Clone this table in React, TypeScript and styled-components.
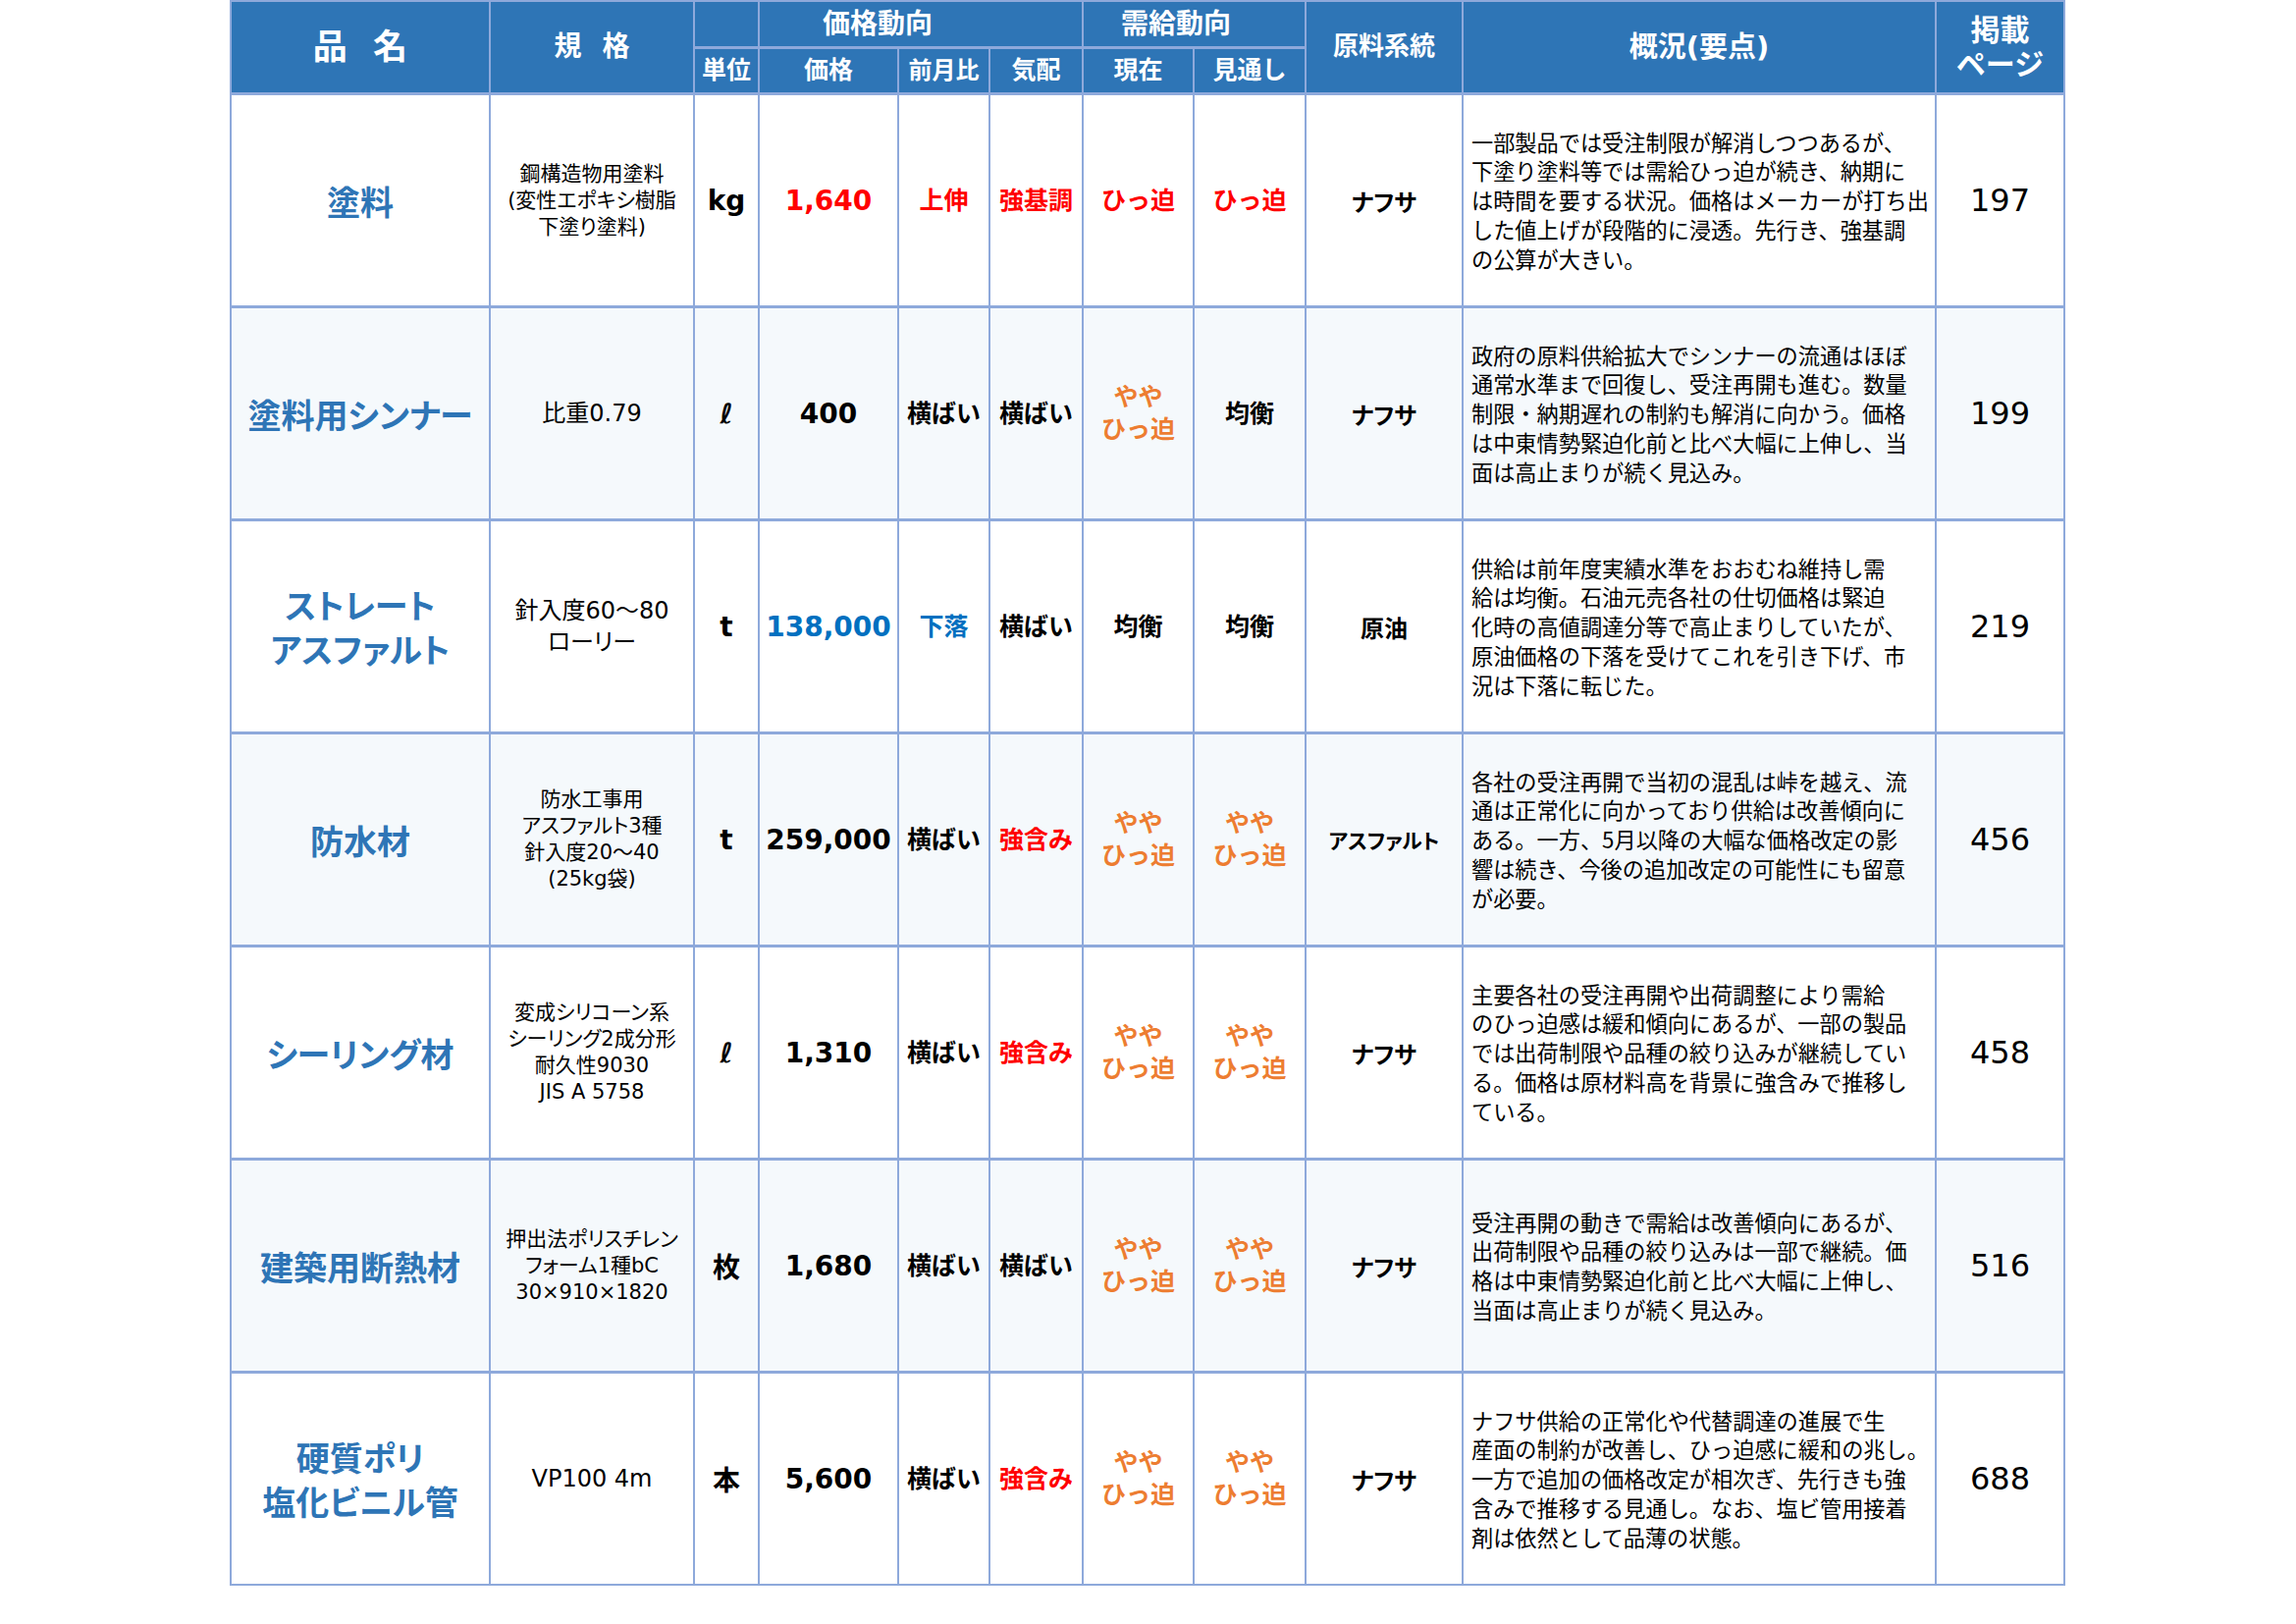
import React from "react";
import styled, { createGlobalStyle } from "styled-components";

const GlobalStyle = createGlobalStyle`
  html, body {
    margin: 0;
    padding: 0;
    background: #ffffff;
  }
  body {
    font-family: "DejaVu Sans", "Noto Sans CJK JP", sans-serif;
    color: #000000;
  }
`;

const HEAD_BG = "#2E75B6";
const LINE = "#8EA9DB";
const SHADE = "#F5F9FC";
const NAME_BLUE = "#2E75B6";
const RED = "#FF0000";
const ORANGE = "#ED7D31";
const BLUE = "#0070C0";
const BLACK = "#000000";

const Table = styled.div`
  display: grid;
  grid-template-columns: 262px 206px 64px 140px 91px 93px 111px 112px 158px 480px 129px;
  grid-template-rows: 45px 44px repeat(7, 214px);
  gap: 3px 2px;
  padding: 2px;
  margin-left: 234px;
  width: max-content;
  background: ${LINE};
`;

const HeadCell = styled.div<{
  $col: string;
  $row: string;
  $size: number;
  $spacing?: number;
  $shift?: number;
  $lh?: number;
}>`
  grid-column: ${(p) => p.$col};
  grid-row: ${(p) => p.$row};
  background: ${HEAD_BG};
  color: #ffffff;
  font-weight: 700;
  font-size: ${(p) => p.$size}px;
  line-height: ${(p) => (p.$lh ? `${p.$lh}px` : "1.2")};
  letter-spacing: ${(p) => p.$spacing ?? 0}em;
  padding-left: ${(p) => p.$spacing ?? 0}em;
  padding-right: ${(p) => p.$shift ?? 0}px;
  display: flex;
  align-items: center;
  justify-content: center;
  text-align: center;
  white-space: nowrap;
`;

const Cell = styled.div<{ $shade: boolean }>`
  background: ${(p) => (p.$shade ? SHADE : "#ffffff")};
  display: flex;
  align-items: center;
  justify-content: center;
  text-align: center;
  white-space: nowrap;
  overflow: hidden;
`;

const NameCell = styled(Cell)`
  color: ${NAME_BLUE};
  font-family: "Noto Sans CJK JP", sans-serif;
  font-weight: 700;
  font-size: 34px;
  line-height: 45px;
  font-feature-settings: "palt";
`;

const SpecCell = styled(Cell)<{ $small: boolean }>`
  font-size: ${(p) => (p.$small ? 21 : 24)}px;
  line-height: ${(p) => (p.$small ? 27 : 32)}px;
  font-feature-settings: "palt";
`;

const UnitCell = styled(Cell)`
  font-weight: 700;
  font-size: 28px;
`;

const PriceCell = styled(Cell)<{ $color: string }>`
  color: ${(p) => p.$color};
  font-weight: 700;
  font-size: 28px;
`;

const TrendCell = styled(Cell)<{ $color: string }>`
  color: ${(p) => p.$color};
  font-weight: 700;
  font-size: 25px;
  line-height: 33px;
`;

const SourceCell = styled(Cell)<{ $small: boolean }>`
  font-weight: 700;
  font-size: ${(p) => (p.$small ? 21 : 24)}px;
  font-feature-settings: "palt";
`;

const NoteCell = styled(Cell)`
  justify-content: flex-start;
  text-align: left;
  padding-left: 8px;
  font-family: "Noto Sans CJK JP", sans-serif;
  font-size: 22.2px;
  line-height: 29.7px;
`;

const NoteLine = styled.span`
  display: block;
  white-space: nowrap;
`;

const PageCell = styled(Cell)`
  font-size: 32px;
  font-weight: 400;
`;

const Lines = styled.div`
  display: flex;
  flex-direction: column;
  align-items: center;
`;

type Row = {
  name: string[];
  spec: string[];
  specSmall: boolean;
  unit: string;
  price: string;
  priceColor: string;
  mom: [string, string];
  mood: [string, string];
  now: [string[], string];
  outlook: [string[], string];
  source: string;
  sourceSmall?: boolean;
  note: string[];
  page: string;
};

const YAYA = ["やや", "ひっ迫"];

const rows: Row[] = [
  {
    name: ["塗料"],
    spec: ["鋼構造物用塗料", "(変性エポキシ樹脂", "下塗り塗料)"],
    specSmall: true,
    unit: "kg",
    price: "1,640",
    priceColor: RED,
    mom: ["上伸", RED],
    mood: ["強基調", RED],
    now: [["ひっ迫"], RED],
    outlook: [["ひっ迫"], RED],
    source: "ナフサ",
    note: [
      "一部製品では受注制限が解消しつつあるが、",
      "下塗り塗料等では需給ひっ迫が続き、納期に",
      "は時間を要する状況。価格はメーカーが打ち出",
      "した値上げが段階的に浸透。先行き、強基調",
      "の公算が大きい。",
    ],
    page: "197",
  },
  {
    name: ["塗料用シンナー"],
    spec: ["比重0.79"],
    specSmall: false,
    unit: "ℓ",
    price: "400",
    priceColor: BLACK,
    mom: ["横ばい", BLACK],
    mood: ["横ばい", BLACK],
    now: [YAYA, ORANGE],
    outlook: [["均衡"], BLACK],
    source: "ナフサ",
    note: [
      "政府の原料供給拡大でシンナーの流通はほぼ",
      "通常水準まで回復し、受注再開も進む。数量",
      "制限・納期遅れの制約も解消に向かう。価格",
      "は中東情勢緊迫化前と比べ大幅に上伸し、当",
      "面は高止まりが続く見込み。",
    ],
    page: "199",
  },
  {
    name: ["ストレート", "アスファルト"],
    spec: ["針入度60～80", "ローリー"],
    specSmall: false,
    unit: "t",
    price: "138,000",
    priceColor: BLUE,
    mom: ["下落", BLUE],
    mood: ["横ばい", BLACK],
    now: [["均衡"], BLACK],
    outlook: [["均衡"], BLACK],
    source: "原油",
    note: [
      "供給は前年度実績水準をおおむね維持し需",
      "給は均衡。石油元売各社の仕切価格は緊迫",
      "化時の高値調達分等で高止まりしていたが、",
      "原油価格の下落を受けてこれを引き下げ、市",
      "況は下落に転じた。",
    ],
    page: "219",
  },
  {
    name: ["防水材"],
    spec: ["防水工事用", "アスファルト3種", "針入度20～40", "(25kg袋)"],
    specSmall: true,
    unit: "t",
    price: "259,000",
    priceColor: BLACK,
    mom: ["横ばい", BLACK],
    mood: ["強含み", RED],
    now: [YAYA, ORANGE],
    outlook: [YAYA, ORANGE],
    source: "アスファルト",
    sourceSmall: true,
    note: [
      "各社の受注再開で当初の混乱は峠を越え、流",
      "通は正常化に向かっており供給は改善傾向に",
      "ある。一方、5月以降の大幅な価格改定の影",
      "響は続き、今後の追加改定の可能性にも留意",
      "が必要。",
    ],
    page: "456",
  },
  {
    name: ["シーリング材"],
    spec: ["変成シリコーン系", "シーリング2成分形", "耐久性9030", "JIS A 5758"],
    specSmall: true,
    unit: "ℓ",
    price: "1,310",
    priceColor: BLACK,
    mom: ["横ばい", BLACK],
    mood: ["強含み", RED],
    now: [YAYA, ORANGE],
    outlook: [YAYA, ORANGE],
    source: "ナフサ",
    note: [
      "主要各社の受注再開や出荷調整により需給",
      "のひっ迫感は緩和傾向にあるが、一部の製品",
      "では出荷制限や品種の絞り込みが継続してい",
      "る。価格は原材料高を背景に強含みで推移し",
      "ている。",
    ],
    page: "458",
  },
  {
    name: ["建築用断熱材"],
    spec: ["押出法ポリスチレン", "フォーム1種bC", "30×910×1820"],
    specSmall: true,
    unit: "枚",
    price: "1,680",
    priceColor: BLACK,
    mom: ["横ばい", BLACK],
    mood: ["横ばい", BLACK],
    now: [YAYA, ORANGE],
    outlook: [YAYA, ORANGE],
    source: "ナフサ",
    note: [
      "受注再開の動きで需給は改善傾向にあるが、",
      "出荷制限や品種の絞り込みは一部で継続。価",
      "格は中東情勢緊迫化前と比べ大幅に上伸し、",
      "当面は高止まりが続く見込み。",
    ],
    page: "516",
  },
  {
    name: ["硬質ポリ", "塩化ビニル管"],
    spec: ["VP100 4m"],
    specSmall: false,
    unit: "本",
    price: "5,600",
    priceColor: BLACK,
    mom: ["横ばい", BLACK],
    mood: ["強含み", RED],
    now: [YAYA, ORANGE],
    outlook: [YAYA, ORANGE],
    source: "ナフサ",
    note: [
      "ナフサ供給の正常化や代替調達の進展で生",
      "産面の制約が改善し、ひっ迫感に緩和の兆し。",
      "一方で追加の価格改定が相次ぎ、先行きも強",
      "含みで推移する見通し。なお、塩ビ管用接着",
      "剤は依然として品薄の状態。",
    ],
    page: "688",
  },
];

const Stack: React.FC<{ lines: string[] }> = ({ lines }) => (
  <Lines>
    {lines.map((l, i) => (
      <span key={i}>{l}</span>
    ))}
  </Lines>
);

export default function App() {
  return (
    <>
      <GlobalStyle />
      <Table>
        <HeadCell $col="1" $row="1 / 3" $size={35} $spacing={0.75}>
          品名
        </HeadCell>
        <HeadCell $col="2" $row="1 / 3" $size={28} $spacing={0.75}>
          規格
        </HeadCell>
        <HeadCell $col="3" $row="1" $size={25} />
        <HeadCell $col="4 / 7" $row="1" $size={28} $shift={88}>
          価格動向
        </HeadCell>
        <HeadCell $col="7 / 9" $row="1" $size={28} $shift={37}>
          需給動向
        </HeadCell>
        <HeadCell $col="9" $row="1 / 3" $size={26}>
          原料系統
        </HeadCell>
        <HeadCell $col="10" $row="1 / 3" $size={29}>
          概況(要点)
        </HeadCell>
        <HeadCell $col="11" $row="1 / 3" $size={30} $lh={35}>
          <Stack lines={["掲載", "ページ"]} />
        </HeadCell>
        <HeadCell $col="3" $row="2" $size={25}>
          単位
        </HeadCell>
        <HeadCell $col="4" $row="2" $size={25}>
          価格
        </HeadCell>
        <HeadCell $col="5" $row="2" $size={24}>
          前月比
        </HeadCell>
        <HeadCell $col="6" $row="2" $size={25}>
          気配
        </HeadCell>
        <HeadCell $col="7" $row="2" $size={25}>
          現在
        </HeadCell>
        <HeadCell $col="8" $row="2" $size={25}>
          見通し
        </HeadCell>

        {rows.map((r, i) => {
          const shade = i % 2 === 1;
          return (
            <React.Fragment key={i}>
              <NameCell $shade={shade}>
                <Stack lines={r.name} />
              </NameCell>
              <SpecCell $shade={shade} $small={r.specSmall}>
                <Stack lines={r.spec} />
              </SpecCell>
              <UnitCell $shade={shade}>{r.unit}</UnitCell>
              <PriceCell $shade={shade} $color={r.priceColor}>
                {r.price}
              </PriceCell>
              <TrendCell $shade={shade} $color={r.mom[1]}>
                {r.mom[0]}
              </TrendCell>
              <TrendCell $shade={shade} $color={r.mood[1]}>
                {r.mood[0]}
              </TrendCell>
              <TrendCell $shade={shade} $color={r.now[1]}>
                <Stack lines={r.now[0]} />
              </TrendCell>
              <TrendCell $shade={shade} $color={r.outlook[1]}>
                <Stack lines={r.outlook[0]} />
              </TrendCell>
              <SourceCell $shade={shade} $small={!!r.sourceSmall}>
                {r.source}
              </SourceCell>
              <NoteCell $shade={shade}>
                <div>
                  {r.note.map((l, j) => (
                    <NoteLine key={j}>{l}</NoteLine>
                  ))}
                </div>
              </NoteCell>
              <PageCell $shade={shade}>{r.page}</PageCell>
            </React.Fragment>
          );
        })}
      </Table>
    </>
  );
}
